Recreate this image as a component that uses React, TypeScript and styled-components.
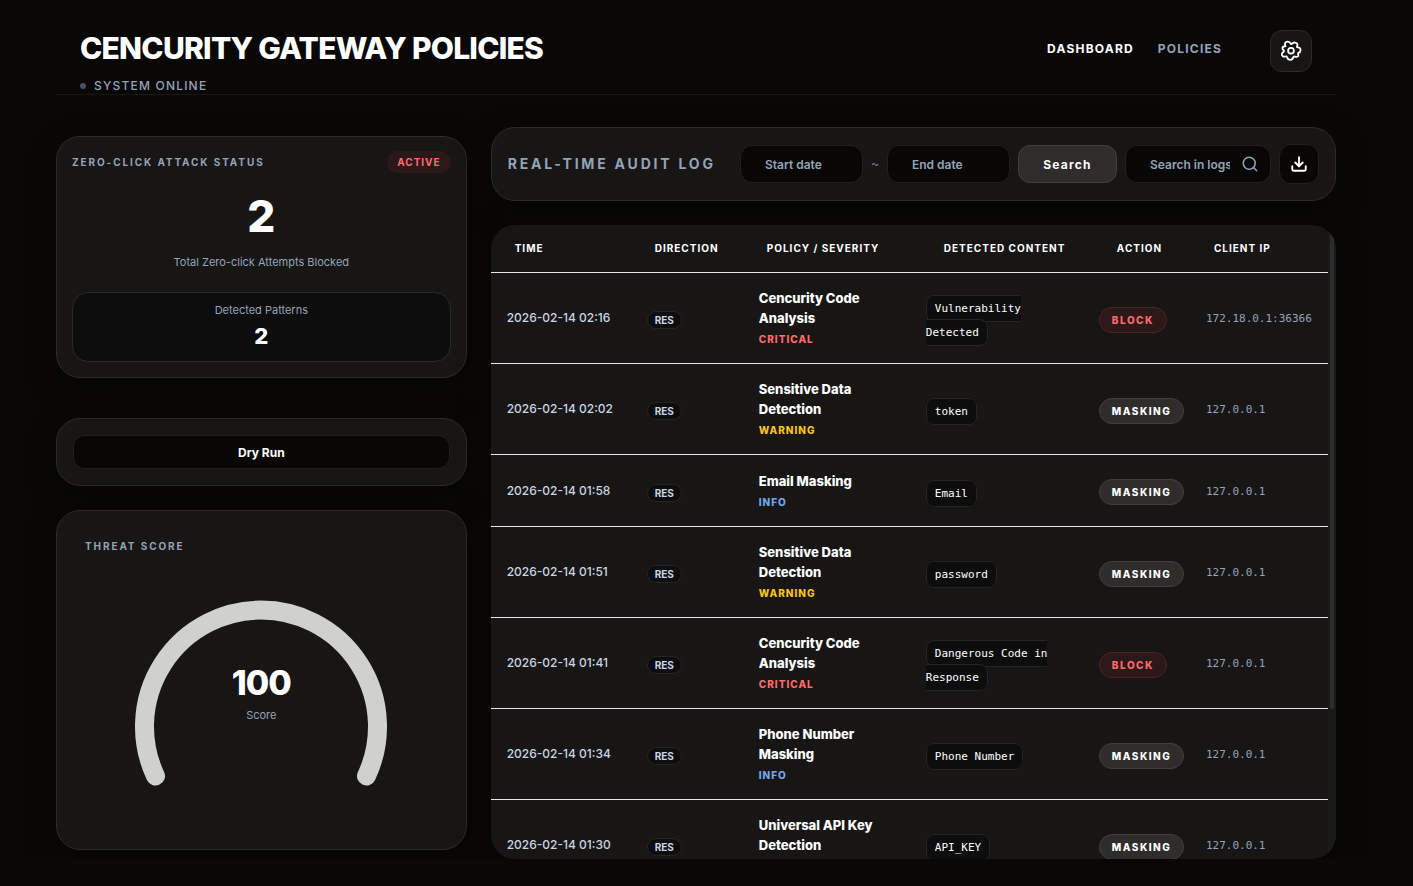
import React from "react";
import styled, { createGlobalStyle } from "styled-components";
import { Download, Search } from "lucide-react";

const muted = "#94a3b8";
const danger = "#ff6b6b";
const surface = "#171615";
const sans = `Inter, "Liberation Sans", sans-serif`;
const mono = `"DejaVu Sans Mono", "Liberation Mono", monospace`;

const GlobalStyle = createGlobalStyle`
  *, *::before, *::after { box-sizing: border-box; }
  body {
    margin: 0;
    background: #090807;
    color: #ffffff;
    font-family: ${sans};
    font-size: 16px;
    line-height: 24px;
  }
  h1, h2, p { margin: 0; }
  button, input { font-family: inherit; color: inherit; }
  button { cursor: pointer; }
`;

const Page = styled.div`
  padding: 0 77px 0 56px;
`;

const Header = styled.header`
  display: flex;
  justify-content: space-between;
  align-items: flex-start;
  height: 95px;
  padding: 30px 24px 0;
  border-bottom: 1px solid #161615;
`;

const Title = styled.h1`
  font-size: 30px;
  line-height: 36px;
  font-weight: 800;
  letter-spacing: -0.025em;
`;

const Status = styled.p`
  display: flex;
  align-items: center;
  gap: 8px;
  margin-top: 10px;
  font-size: 12px;
  line-height: 20px;
  font-weight: 500;
  letter-spacing: 0.1em;
  color: ${muted};
`;

const Dot = styled.span`
  width: 6px;
  height: 6px;
  border-radius: 50%;
  background: #475069;
`;

const Nav = styled.nav`
  display: flex;
  align-items: flex-start;
  gap: 24px;
`;

const NavLink = styled.a<{ $active?: boolean }>`
  font-size: 12px;
  line-height: 38px;
  font-weight: 700;
  letter-spacing: 0.1em;
  text-decoration: none;
  color: ${(p) => (p.$active ? "#ffffff" : muted)};
`;

const SettingsButton = styled.button`
  display: flex;
  align-items: center;
  justify-content: center;
  width: 42px;
  height: 42px;
  margin-left: 24px;
  padding: 0;
  border: 1px solid #2a2a29;
  border-radius: 12px;
  background: ${surface};
`;

const Layout = styled.main`
  display: grid;
  grid-template-columns: repeat(12, minmax(0, 1fr));
  column-gap: 24px;
  align-items: start;
  padding-top: 32px;
`;

const Sidebar = styled.div`
  grid-column: span 4;
  padding-top: 9px;
`;

const Content = styled.div`
  grid-column: span 8;
  display: flex;
  flex-direction: column;
  gap: 24px;
  min-width: 0;
`;

const Card = styled.section<{ $pad: string; $gap?: number }>`
  margin-bottom: ${(p) => p.$gap ?? 0}px;
  padding: ${(p) => p.$pad};
  border: 1px solid #2b2b2a;
  border-radius: 24px;
  background: ${surface};
  box-shadow: 0 8px 32px rgba(0, 0, 0, 0.35);
`;

const CardHead = styled.div`
  display: flex;
  justify-content: space-between;
  align-items: center;
`;

const CardTitle = styled.h2`
  font-size: 10px;
  line-height: 14px;
  font-weight: 700;
  letter-spacing: 0.19em;
  color: ${muted};
`;

const ActiveBadge = styled.span`
  padding: 0 10px;
  border-radius: 11px;
  background: #2c1818;
  color: ${danger};
  font-size: 10px;
  line-height: 22px;
  font-weight: 700;
  letter-spacing: 0.1em;
`;

const Figure = styled.p<{ $size: number; $line: number; $tracking?: number }>`
  font-size: ${(p) => p.$size}px;
  line-height: ${(p) => p.$line}px;
  font-weight: 800;
  letter-spacing: ${(p) => p.$tracking ?? 0}px;
  text-align: center;
`;

const Caption = styled.p`
  font-size: 11px;
  line-height: 16px;
  text-align: center;
  color: ${muted};
`;

const Attempts = styled.div`
  padding: 20px 0 22px;

  ${Caption} { margin-top: 14px; }
`;

const PatternBox = styled.div`
  padding: 9px 0 10px;
  border: 1px solid #2a2a29;
  border-radius: 16px;
  background: #0d0d0d;

  ${Figure} { margin-top: 3px; }
`;

const DryRunButton = styled.button`
  width: 100%;
  height: 34px;
  padding: 0;
  border: 1px solid #1f1f1e;
  border-radius: 12px;
  background: #080706;
  font-size: 12px;
  font-weight: 700;
`;

const Gauge = styled.div`
  position: relative;
  width: 252px;
  margin: 47px auto 35px;

  svg { display: block; width: 100%; }
`;

const GaugeLabel = styled.div`
  position: absolute;
  inset: 63px 0 auto;

  ${Caption} { margin-top: 4px; }
`;

const Toolbar = styled.form`
  display: flex;
  align-items: center;
  gap: 8px;
  height: 74px;
  padding: 0 16px;
  border: 1px solid #2b2b2a;
  border-radius: 24px;
  background: ${surface};
  box-shadow: 0 8px 32px rgba(0, 0, 0, 0.35);
`;

const ToolbarTitle = styled.h2`
  flex: 1;
  font-size: 14px;
  line-height: 20px;
  font-weight: 700;
  letter-spacing: 0.2em;
  white-space: nowrap;
  color: ${muted};
`;

const Field = styled.input`
  width: 123px;
  height: 38px;
  padding: 0 24px;
  border: 1px solid #1f1f1e;
  border-radius: 12px;
  outline: none;
  background: #080706;
  font-size: 12px;
  font-weight: 600;

  &::placeholder { color: ${muted}; opacity: 1; }
`;

const Tilde = styled.span`
  width: 8px;
  font-size: 12px;
  font-weight: 600;
  text-align: center;
  color: #64748b;
`;

const SearchButton = styled.button`
  width: 99px;
  height: 38px;
  padding: 0;
  border: 1px solid #40403f;
  border-radius: 12px;
  background: #2e2d2c;
  font-size: 12px;
  font-weight: 700;
  letter-spacing: 0.1em;
`;

const SearchBox = styled.div`
  position: relative;
  width: 146px;

  ${Field} {
    display: block;
    width: 100%;
    padding-right: 40px;
  }

  svg {
    position: absolute;
    top: 10px;
    right: 12px;
    color: ${muted};
  }
`;

const DownloadButton = styled.button`
  display: flex;
  align-items: center;
  justify-content: center;
  width: 40px;
  height: 40px;
  padding: 0;
  border: 1px solid #1f1f1e;
  border-radius: 12px;
  background: #080706;
`;

const LogPanel = styled.section`
  display: flex;
  height: calc(100vh - 252px);
  border-radius: 24px;
  overflow: hidden;
  background: ${surface};
  box-shadow: 0 8px 32px rgba(0, 0, 0, 0.35);
`;

const LogScroll = styled.div`
  flex: 1;
  min-width: 0;
  overflow-y: auto;
  scrollbar-width: none;
`;

const ScrollTrack = styled.div`
  width: 8px;
  padding: 8px 2px 0;
  background: #1a1a1a;
`;

const ScrollThumb = styled.div`
  height: 76%;
  border-radius: 2px;
  background: #2d2d2d;
`;

const Table = styled.table`
  width: 100%;
  table-layout: fixed;
  border-collapse: separate;
  border-spacing: 0;
`;

const Col = styled.col<{ $w: number }>`
  width: ${(p) => p.$w}px;
`;

const Th = styled.th<{ $inset?: number }>`
  height: 48px;
  padding: 0 0 2px ${(p) => p.$inset ?? 24}px;
  border-bottom: 1px solid #e5e7eb;
  text-align: left;
  white-space: nowrap;
  font-size: 10px;
  line-height: 16px;
  font-weight: 700;
  letter-spacing: 0.1em;
`;

const Td = styled.td`
  height: 72px;
  padding: 16px 0 16px 16px;
  border-bottom: 1px solid #e5e7eb;
  vertical-align: middle;
`;

const TimeTd = styled(Td)`
  font-size: 12px;
  font-weight: 500;
  color: #cbd5e1;
`;

const PolicyTd = styled(Td)`
  padding-top: 15px;
  padding-bottom: 17px;
`;

const ActionTd = styled(Td)`
  padding-top: 18px;
`;

const IpTd = styled(ActionTd)`
  font-family: ${mono};
  font-size: 11px;
  color: ${muted};
`;

const Pill = styled.span`
  display: inline-block;
  padding: 0 7px;
  border: 1px solid #242424;
  border-radius: 9px;
  background: #0d0d0d;
  font-size: 10px;
  line-height: 16px;
  font-weight: 700;
  color: #cbd5e1;
`;

const PolicyName = styled.p`
  width: 120px;
  font-size: 13px;
  line-height: 20px;
  font-weight: 800;
`;

type Level = "CRITICAL" | "WARNING" | "INFO";
const levelColor: Record<Level, string> = {
  CRITICAL: danger,
  WARNING: "#fcc419",
  INFO: "#72a8e8",
};

const Severity = styled.p<{ $level: Level }>`
  margin-top: 4px;
  font-size: 10px;
  line-height: 14px;
  font-weight: 800;
  letter-spacing: 0.1em;
  color: ${(p) => levelColor[p.$level]};
`;

const Snippet = styled.code`
  padding: 6px 8px;
  border: 1px solid #242424;
  border-radius: 8px;
  background: #0d0d0d;
  font-family: ${mono};
  font-size: 11px;
  line-height: 18px;
`;

const ActionPill = styled.span<{ $block: boolean }>`
  display: inline-block;
  padding: 0 12px;
  border: 1px solid ${(p) => (p.$block ? "#4a2524" : "#40403f")};
  border-radius: 13px;
  background: ${(p) => (p.$block ? "#2c1818" : "#2e2d2c")};
  font-size: 10px;
  line-height: 24px;
  font-weight: 800;
  letter-spacing: 0.15em;
  color: ${(p) => (p.$block ? danger : "#ffffff")};
`;

interface Entry {
  time: string;
  policy: string;
  level: Level;
  content: string;
  action: "BLOCK" | "MASKING";
  ip: string;
}

const entries: Entry[] = [
  { time: "2026-02-14 02:16", policy: "Cencurity Code Analysis", level: "CRITICAL", content: "Vulnerability Detected", action: "BLOCK", ip: "172.18.0.1:36366" },
  { time: "2026-02-14 02:02", policy: "Sensitive Data Detection", level: "WARNING", content: "token", action: "MASKING", ip: "127.0.0.1" },
  { time: "2026-02-14 01:58", policy: "Email Masking", level: "INFO", content: "Email", action: "MASKING", ip: "127.0.0.1" },
  { time: "2026-02-14 01:51", policy: "Sensitive Data Detection", level: "WARNING", content: "password", action: "MASKING", ip: "127.0.0.1" },
  { time: "2026-02-14 01:41", policy: "Cencurity Code Analysis", level: "CRITICAL", content: "Dangerous Code in Response", action: "BLOCK", ip: "127.0.0.1" },
  { time: "2026-02-14 01:34", policy: "Phone Number Masking", level: "INFO", content: "Phone Number", action: "MASKING", ip: "127.0.0.1" },
  { time: "2026-02-14 01:30", policy: "Universal API Key Detection", level: "CRITICAL", content: "API_KEY", action: "MASKING", ip: "127.0.0.1" },
];

const GearIcon = () => (
  <svg width="22" height="22" viewBox="0 0 22 22" fill="none" stroke="#ffffff" strokeWidth="1.8" strokeLinecap="round" strokeLinejoin="round" aria-hidden="true">
    <circle cx="11" cy="10.8" r="2.9" />
    <path d="M5.4 5.8C4.2 3.2 5.4 1.5 7.8 1.6C9.4 1.7 10.2 2.4 10.7 3.6C11 4.3 11.5 4.2 12.2 3.5C13.6 2.1 16.2 2.2 17.2 3.8C17.8 4.8 17.5 5.6 17 6.4C16.6 7.1 17.2 7.4 18.2 7.4C20 7.5 20.6 8.8 20.5 10.4C20.4 11.8 19.7 12.5 18.5 12.8C17.8 13 17.9 13.6 18.2 14.4C18.8 16.2 17.6 17 16 16.8C14.8 16.6 13.9 15.8 13.5 16.9C13 18.4 12 19.8 10.2 19.8C8.4 19.8 7.5 18.6 7.1 17.2C6.8 16.2 6.4 16.2 5.4 16.5C3.2 17.1 1.8 15.8 1.8 14.2C1.8 13 2.6 12.4 3.6 11.7C4.3 11.2 4.2 10.6 3.4 10C1.8 8.6 2.2 6.7 4 6.5C5 6.4 5.7 6.5 5.4 5.8Z" />
  </svg>
);

export default function App() {
  return (
    <>
      <GlobalStyle />
      <Page>
        <Header>
          <div>
            <Title>CENCURITY GATEWAY POLICIES</Title>
            <Status><Dot />SYSTEM ONLINE</Status>
          </div>
          <Nav aria-label="Main">
            <NavLink href="#dashboard" $active>DASHBOARD</NavLink>
            <NavLink href="#policies">POLICIES</NavLink>
            <SettingsButton type="button" aria-label="Settings"><GearIcon /></SettingsButton>
          </Nav>
        </Header>
        <Layout>
          <Sidebar>
            <Card $pad="14px 15px 15px" $gap={40}>
              <CardHead>
                <CardTitle>ZERO-CLICK ATTACK STATUS</CardTitle>
                <ActiveBadge>ACTIVE</ActiveBadge>
              </CardHead>
              <Attempts>
                <Figure $size={44} $line={47}>2</Figure>
                <Caption>Total Zero-click Attempts Blocked</Caption>
              </Attempts>
              <PatternBox>
                <Caption>Detected Patterns</Caption>
                <Figure $size={22} $line={30}>2</Figure>
              </PatternBox>
            </Card>
            <Card $pad="16px" $gap={24}>
              <DryRunButton type="button">Dry Run</DryRunButton>
            </Card>
            <Card $pad="28px">
              <CardTitle>THREAT SCORE</CardTitle>
              <Gauge>
                <svg viewBox="0 0 252 186" role="img" aria-label="Threat score 100">
                  <path d="M20.5 176A116.5 116.5 0 1 1 231.5 176" fill="none" stroke="#d0d0cf" strokeWidth="19" strokeLinecap="round" />
                </svg>
                <GaugeLabel>
                  <Figure $size={34} $line={40} $tracking={-1}>100</Figure>
                  <Caption>Score</Caption>
                </GaugeLabel>
              </Gauge>
            </Card>
          </Sidebar>
          <Content>
            <Toolbar onSubmit={(e) => e.preventDefault()}>
              <ToolbarTitle>REAL-TIME AUDIT LOG</ToolbarTitle>
              <Field type="text" placeholder="Start date" aria-label="Start date" />
              <Tilde>~</Tilde>
              <Field type="text" placeholder="End date" aria-label="End date" />
              <SearchButton type="submit">Search</SearchButton>
              <SearchBox>
                <Field type="text" placeholder="Search in logs" aria-label="Search in logs" />
                <Search size={18} strokeWidth={2} />
              </SearchBox>
              <DownloadButton type="button" aria-label="Download log"><Download size={18} strokeWidth={2.5} /></DownloadButton>
            </Toolbar>
            <LogPanel>
              <LogScroll>
                <Table>
                  <colgroup>
                    <Col $w={140} />
                    <Col $w={112} />
                    <Col $w={167} />
                    <Col $w={173} />
                    <Col $w={107} />
                    <Col $w={138} />
                  </colgroup>
                  <thead>
                    <tr>
                      <Th>TIME</Th>
                      <Th>DIRECTION</Th>
                      <Th>POLICY / SEVERITY</Th>
                      <Th $inset={34}>DETECTED CONTENT</Th>
                      <Th $inset={34}>ACTION</Th>
                      <Th>CLIENT IP</Th>
                    </tr>
                  </thead>
                  <tbody>
                    {entries.map((e) => (
                      <tr key={e.time}>
                        <TimeTd>{e.time}</TimeTd>
                        <Td><Pill>RES</Pill></Td>
                        <PolicyTd>
                          <PolicyName>{e.policy}</PolicyName>
                          <Severity $level={e.level}>{e.level}</Severity>
                        </PolicyTd>
                        <Td><Snippet>{e.content}</Snippet></Td>
                        <ActionTd><ActionPill $block={e.action === "BLOCK"}>{e.action}</ActionPill></ActionTd>
                        <IpTd>{e.ip}</IpTd>
                      </tr>
                    ))}
                  </tbody>
                </Table>
              </LogScroll>
              <ScrollTrack><ScrollThumb /></ScrollTrack>
            </LogPanel>
          </Content>
        </Layout>
      </Page>
    </>
  );
}
